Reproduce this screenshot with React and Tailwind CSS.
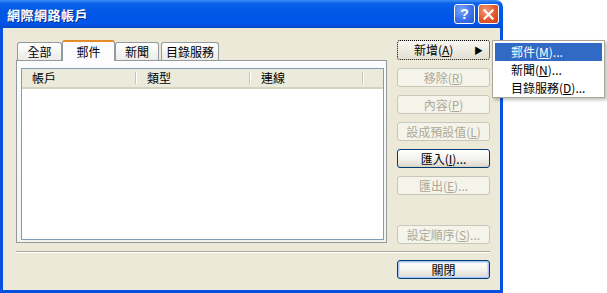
import React from 'react'

const cjk = "font-['Noto_Sans_CJK_TC','Noto_Sans',sans-serif]"

function Btn({ children, disabled, isDefault, className = '' }) {
    if (disabled) {
        return (
            <div className={`h-[19px] w-[93px] rounded-[3px] border border-[#C9C7BA] bg-[#F5F4EA] text-[#ACA899] text-[12px] leading-none flex items-center justify-center ${className}`}>
                {children}
            </div>
        )
    }
    return (
        <div className={`h-[19px] w-[93px] rounded-[3px] border border-[#003C74] bg-gradient-to-b from-white via-[#F4F3EE] to-[#DCD9CC] text-black text-[12px] leading-none flex items-center justify-center ${isDefault ? 'shadow-[inset_0_0_0_1px_#A9C4F2,inset_0_0_0_2px_#CEDDF8]' : 'shadow-[inset_0_-1px_0_#D6D0C5]'} ${className}`}>
            {children}
        </div>
    )
}

function Tab({ label, selected, w }) {
    if (selected) {
        return (
            <div className={`${w} h-[21px] -mb-px relative z-10 rounded-t-[3px] border-x border-[#919B9C] border-t-2 border-t-[#E68B2C] bg-[#FCFCFE] text-[12px] leading-none flex items-center justify-center text-black`}>
                {label}
            </div>
        )
    }
    return (
        <div className={`${w} h-[18px] rounded-t-[3px] border border-b-0 border-[#919B9C] bg-gradient-to-b from-white to-[#ECEBE6] text-[12px] leading-none flex items-center justify-center text-black pt-px`}>
            {label}
        </div>
    )
}

const columns = [
    { label: '帳戶', w: 'w-[115px]' },
    { label: '類型', w: 'w-[114px]' },
    { label: '連線', w: 'w-[113px]' },
]

export default function App() {
    return (
        <div className={`w-[607px] h-[293px] bg-white relative overflow-hidden ${cjk}`}>
            {/* window */}
            <div className="w-[503px] h-[293px] flex flex-col">
                {/* title bar */}
                <div className="h-[28px] rounded-tr-[7px] bg-[linear-gradient(180deg,#3E90F6_0%,#0C62EA_12%,#0057E6_45%,#0056E9_85%,#0047C8_100%)] flex items-center pl-[7px] pr-[4px]">
                    <span className="text-white font-bold text-[13px] leading-none [text-shadow:1px_1px_0_#0A2F8F] tracking-[0.5px]">網際網路帳戶</span>
                    <div className="ml-auto flex gap-[3px] items-center">
                        <div className="w-[21px] h-[20px] rounded-[3px] border border-white bg-[radial-gradient(circle_at_35%_30%,#7AA8F9_0%,#3C72EA_55%,#2458D6_100%)] flex items-center justify-center">
                            <span className="text-white font-bold text-[14px] leading-none font-['Liberation_Sans',sans-serif]">?</span>
                        </div>
                        <div className="w-[21px] h-[20px] rounded-[3px] border border-white bg-[radial-gradient(circle_at_35%_30%,#F29A72_0%,#E2592E_55%,#C8421C_100%)] flex items-center justify-center">
                            <svg width="11" height="11" viewBox="0 0 11 11">
                                <path d="M1.5 1.5 L9.5 9.5 M9.5 1.5 L1.5 9.5" stroke="white" strokeWidth="2.2" strokeLinecap="square" />
                            </svg>
                        </div>
                    </div>
                </div>

                {/* body */}
                <div className="flex-1 bg-[#0552E0] px-[3px] pb-[3px]">
                    <div className="h-full bg-[#ECE9D8] pl-[13px] pr-[10px] pt-[12px] flex flex-col">
                        <div className="flex gap-[10px] h-[204px]">
                            {/* tabs + panel */}
                            <div className="w-[371px] flex flex-col h-[203px]">
                                <div className="flex items-end h-[20px] pl-[1px]">
                                    <Tab label="全部" w="w-[45px]" />
                                    <Tab label="郵件" w="w-[53px]" selected />
                                    <Tab label="新聞" w="w-[44px]" />
                                    <div className="w-[2px]" />
                                    <Tab label="目錄服務" w="w-[58px]" />
                                </div>
                                <div className="flex-1 border border-[#919B9C] bg-gradient-to-b from-[#FCFCFE] to-[#F4F3EE] pt-[7px] pl-[4px] pr-[2px] pb-[2px]">
                                    <div className="h-full border border-[#7F9DB9] bg-white flex flex-col">
                                        <div className="h-[20px] bg-[#EBEADB] border-b-2 border-[#D6D2C2] flex text-[12px] leading-none text-black">
                                            {columns.map((c) => (
                                                <div key={c.label} className={`${c.w} flex items-center pl-[10px] relative`}>
                                                    {c.label}
                                                    <div className="absolute right-0 top-[3px] bottom-[3px] w-[2px] border-l border-[#C7C5B2] border-r border-r-white" />
                                                </div>
                                            ))}
                                        </div>
                                        <div className="flex-1" />
                                    </div>
                                </div>
                            </div>

                            {/* buttons */}
                            <div className="w-[93px] flex flex-col">
                                <div className="h-[20px] w-[93px] rounded-[3px] bg-gradient-to-b from-[#F8F7F2] to-[#E3E0D2] border border-dotted border-black text-[12px] leading-none flex items-center text-black pl-[16px] pr-[6px]">
                                    <span>新增(<span className="underline">A</span>)</span>
                                    <span className="ml-auto text-[9px]">▶</span>
                                </div>
                                <Btn disabled className="mt-[8px]">移除(<span className="underline">R</span>)</Btn>
                                <Btn disabled className="mt-[8px]">內容(<span className="underline">P</span>)</Btn>
                                <Btn disabled className="mt-[8px]">設成預設值(<span className="underline">L</span>)</Btn>
                                <Btn className="mt-[8px]">匯入(<span className="underline">I</span>)...</Btn>
                                <Btn disabled className="mt-[8px]">匯出(<span className="underline">E</span>)...</Btn>
                                <Btn disabled className="mt-auto">設定順序(<span className="underline">S</span>)...</Btn>
                            </div>
                        </div>

                        <div className="mt-[7px] border-t border-[#ACA899] border-b border-b-white" />

                        <div className="mt-[7px] flex justify-end">
                            <Btn isDefault>關閉</Btn>
                        </div>
                    </div>
                </div>
            </div>

            {/* submenu */}
            <div className="absolute left-[492px] top-[40px] w-[113px] h-[58px] bg-white border border-[#ACA899] shadow-[2px_2px_3px_rgba(0,0,0,0.25)] p-[2px] text-[12px] leading-none">
                <div className="h-[18px] bg-[#316AC5] text-white flex items-center pl-[16px]">
                    郵件(<span className="underline">M</span>)...
                </div>
                <div className="h-[18px] text-black flex items-center pl-[16px]">
                    新聞(<span className="underline">N</span>)...
                </div>
                <div className="h-[18px] text-black flex items-center pl-[16px]">
                    目錄服務(<span className="underline">D</span>)...
                </div>
            </div>
        </div>
    )
}
